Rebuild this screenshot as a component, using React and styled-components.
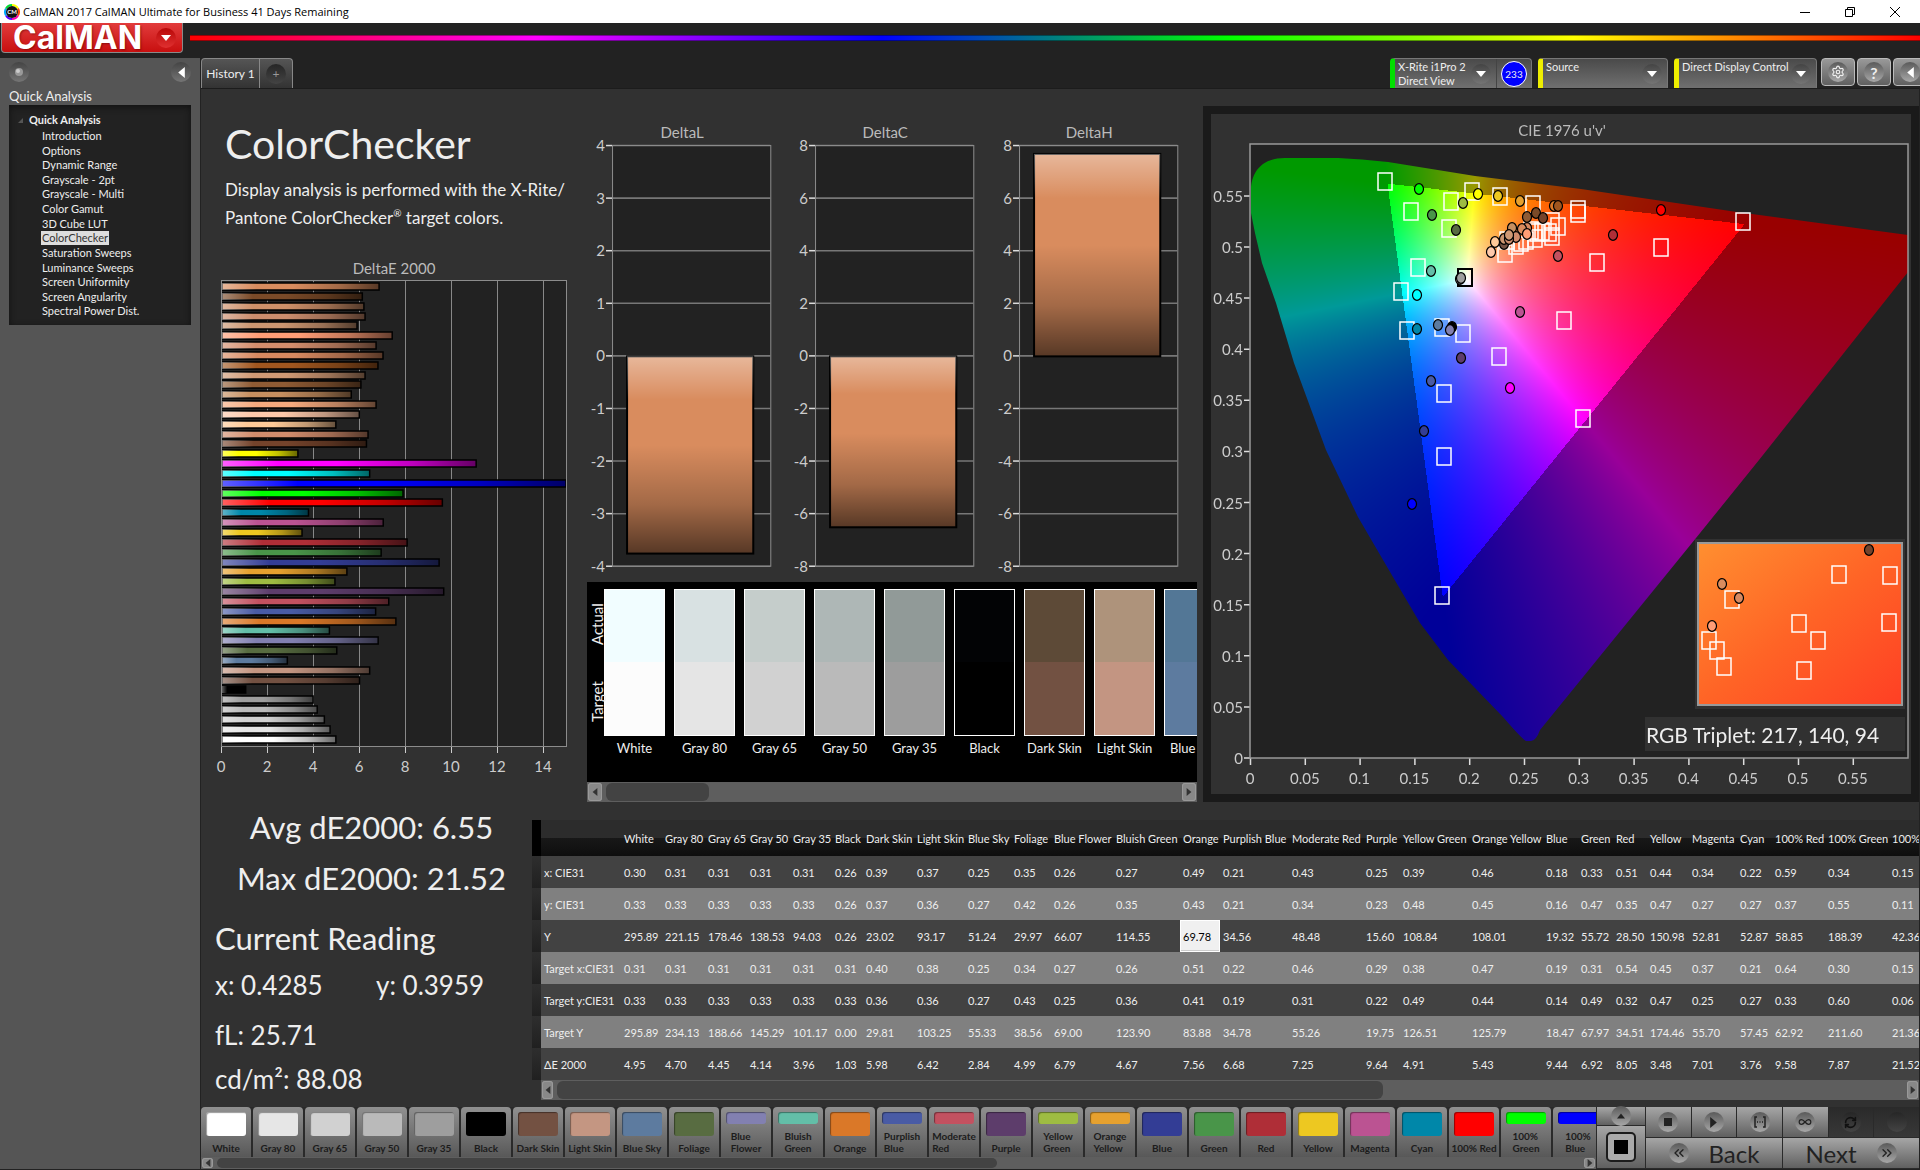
import React, {useEffect, useRef} from 'react';
import styled, {createGlobalStyle, css} from 'styled-components';
import {ChevronsLeft, ChevronsRight, Infinity as Loop, RefreshCw, Settings} from 'lucide-react';

const GlobalStyle = createGlobalStyle`
    * {
        box-sizing: border-box;
    }
    body {
        margin: 0;
        background: #222;
        color: #eee;
        font-family: Lato, "Liberation Sans", sans-serif;
        font-size: 11px;
        overflow: hidden;
    }
    button {
        font-family: inherit;
        font-size: inherit;
        color: inherit;
        border: 0;
        padding: 0;
        background: none;
    }
    h1, h2, p, ul {
        margin: 0;
        padding: 0;
        font-weight: 400;
    }
    svg text {
        font-family: Lato, "Liberation Sans", sans-serif;
    }
`

// ---------- data ----------

const pages = [
    'Introduction', 'Options', 'Dynamic Range', 'Grayscale - 2pt', 'Grayscale - Multi', 'Color Gamut',
    '3D Cube LUT', 'ColorChecker', 'Saturation Sweeps', 'Luminance Sweeps', 'Screen Uniformity',
    'Screen Angularity', 'Spectral Power Dist.',
];

// name, colour, column width, x, y, Y, target x, target y, target Y, dE
const patches = [
    ['White', '#ffffff', 41, '0.30', '0.33', '295.89', '0.31', '0.33', '295.89', '4.95'],
    ['Gray 80', '#e6e6e6', 43, '0.31', '0.33', '221.15', '0.31', '0.33', '234.13', '4.70'],
    ['Gray 65', '#d1d1d1', 42, '0.31', '0.33', '178.46', '0.31', '0.33', '188.66', '4.45'],
    ['Gray 50', '#bababa', 43, '0.31', '0.33', '138.53', '0.31', '0.33', '145.29', '4.14'],
    ['Gray 35', '#9e9e9e', 42, '0.31', '0.33', '94.03', '0.31', '0.33', '101.17', '3.96'],
    ['Black', '#000000', 31, '0.26', '0.26', '0.26', '0.31', '0.33', '0.00', '1.03'],
    ['Dark Skin', '#735142', 51, '0.39', '0.37', '23.02', '0.40', '0.36', '29.81', '5.98'],
    ['Light Skin', '#c49682', 51, '0.37', '0.36', '93.17', '0.38', '0.36', '103.25', '6.42'],
    ['Blue Sky', '#5d7b9f', 46, '0.25', '0.27', '51.24', '0.25', '0.27', '55.33', '2.84'],
    ['Foliage', '#586c41', 40, '0.35', '0.42', '29.97', '0.34', '0.43', '38.56', '4.99'],
    ['Blue Flower', '#8280b1', 62, '0.26', '0.26', '66.07', '0.27', '0.25', '69.00', '6.79'],
    ['Bluish Green', '#63bea8', 67, '0.27', '0.35', '114.55', '0.26', '0.36', '123.90', '4.67'],
    ['Orange', '#da7828', 40, '0.49', '0.43', '69.78', '0.51', '0.41', '83.88', '7.56'],
    ['Purplish Blue', '#495ba5', 69, '0.21', '0.21', '34.56', '0.22', '0.19', '34.78', '6.68'],
    ['Moderate Red', '#c35160', 74, '0.43', '0.34', '48.48', '0.46', '0.31', '55.26', '7.25'],
    ['Purple', '#5d3d6b', 37, '0.25', '0.23', '15.60', '0.29', '0.22', '19.75', '9.64'],
    ['Yellow Green', '#9ebc42', 69, '0.39', '0.48', '108.84', '0.38', '0.49', '126.51', '4.91'],
    ['Orange Yellow', '#e6a12f', 74, '0.46', '0.45', '108.01', '0.47', '0.44', '125.79', '5.43'],
    ['Blue', '#333d95', 35, '0.18', '0.16', '19.32', '0.19', '0.14', '18.47', '9.44'],
    ['Green', '#499549', 35, '0.33', '0.47', '55.72', '0.31', '0.49', '67.97', '6.92'],
    ['Red', '#af2e37', 34, '0.51', '0.35', '28.50', '0.54', '0.32', '34.51', '8.05'],
    ['Yellow', '#edc821', 42, '0.44', '0.47', '150.98', '0.45', '0.47', '174.46', '3.48'],
    ['Magenta', '#bb5392', 48, '0.34', '0.27', '52.81', '0.37', '0.25', '55.70', '7.01'],
    ['Cyan', '#0087a9', 35, '0.22', '0.27', '52.87', '0.21', '0.27', '57.45', '3.76'],
    ['100% Red', '#ff0000', 53, '0.59', '0.37', '58.85', '0.64', '0.33', '62.92', '9.58'],
    ['100% Green', '#00ff00', 64, '0.34', '0.55', '188.39', '0.30', '0.60', '211.60', '7.87'],
    ['100% Blue', '#0000ff', 64, '0.15', '0.11', '42.36', '0.15', '0.06', '21.36', '21.52'],
];

const rowNames = ['x: CIE31', 'y: CIE31', 'Y', 'Target x:CIE31', 'Target y:CIE31', 'Target Y', 'ΔE 2000'];

const extraBars = [
    ['#d98c5e', 6.83], ['#7a4a28', 6.1], ['#ce9069', 6.17], ['#cc8d6d', 6.22], ['#cb9570', 5.87],
    ['#ff9d76', 7.4], ['#d38d6c', 6.7], ['#d78960', 7], ['#a0561f', 6.78], ['#d09974', 6.22],
    ['#8f5b34', 6.04], ['#c68f60', 5.62], ['#f6aa7e', 6.7], ['#fec9ab', 5.97], ['#ffca98', 4.95],
    ['#d18c6c', 6.35], ['#74432b', 6.28], ['#ffff00', 3.3], ['#ff00ff', 11.05], ['#00ffff', 6.42],
];
const bars = extraBars.concat(patches.map(p => [p[1], Number(p[9])]).reverse());

const compared = [
    ['White', '#f1fdff', '#fcfcfc'], ['Gray 80', '#d8e1e2', '#e5e5e5'], ['Gray 65', '#c5cdcb', '#d1d1d1'],
    ['Gray 50', '#aeb7b6', '#bababa'], ['Gray 35', '#919a98', '#9d9d9d'], ['Black', '#020305', '#000000'],
    ['Dark Skin', '#5d4a37', '#725142'], ['Light Skin', '#ae937b', '#c39582'], ['Blue Sky', '#537796', '#5d7b9f'],
];

const targets = [
    [174, 67], [200, 97], [240, 87], [261, 77], [289, 82], [322, 90], [238, 114], [207, 153], [190, 177],
    [196, 216], [231, 213], [252, 219], [288, 242], [233, 279], [233, 342], [372, 304], [353, 206],
    [386, 148], [450, 133], [532, 107], [367, 95], [367, 99], [347, 112], [341, 122], [338, 118],
    [341, 107], [294, 139], [305, 131], [310, 128], [315, 126], [324, 124], [326, 118], [320, 116],
    [331, 117], [296, 126], [231, 481],
];

const readings = [
    [208, 75, '#00ff00'], [221, 101, '#499549'], [252, 89, '#9ebc42'], [267, 80, '#ffff00'],
    [287, 82, '#edc821'], [309, 87, '#e6a12f'], [343, 92, '#da7828'], [347, 92, '#a0561f'],
    [450, 96, '#ff0000'], [402, 121, '#af2e37'], [347, 142, '#c35160'], [245, 116, '#586c41'],
    [220, 157, '#63bea8'], [206, 181, '#00ffff'], [206, 215, '#0087a9'], [227, 211, '#5d7b9f'],
    [241, 213, '#000000'], [239, 216, '#8280b1'], [250, 244, '#5d3d6b'], [220, 267, '#495ba5'],
    [299, 274, '#ff00ff'], [309, 198, '#bb5392'], [213, 317, '#333d95'], [201, 390, '#0000ff'],
    [249, 165, '#d1d1d1'], [250, 164, '#9e9e9e'], [316, 103, '#8f5b34'], [325, 99, '#7a4a28'],
    [332, 104, '#74432b'], [301, 114, '#c68f60'], [316, 114, '#d78960'], [311, 115, '#d98c5e'],
    [316, 120, '#ff9d76'], [305, 123, '#d18c6c'], [293, 130, '#735142'], [293, 125, '#cb9570'],
    [298, 125, '#cc8d6d'], [298, 121, '#d09974'], [284, 128, '#ffca98'], [280, 138, '#fec9ab'],
];

const insetTargets = [
    [628, 460], [679, 461], [521, 485], [588, 509], [678, 508], [607, 526], [498, 526], [506, 536],
    [513, 552], [593, 556],
];
const insetReadings = [[658, 436, '#74432b'], [511, 470, '#d98c5e'], [528, 484, '#d78960'], [501, 512, '#ff9d76']];

// ---------- frame ----------

const TitleBar = styled.header`
    display: flex;
    align-items: center;
    height: 23px;
    padding: 0 17px 0 4px;
    background: #fff;
    color: #000;
    font-family: "Open Sans", sans-serif;
    font-size: 11px;
    svg {
        display: block;
    }
`
const AppTitle = styled.span`
    flex: 1;
    padding-left: 3px;
`
const WindowButtons = styled.div`
    display: flex;
    gap: 29px;
`

const Brand = styled.div`
    display: flex;
    align-items: flex-start;
    gap: 7px;
    height: 35px;
`
const LogoButton = styled.button`
    display: flex;
    align-items: center;
    justify-content: space-between;
    width: 182px;
    height: 30px;
    margin-left: 1px;
    padding: 0 6px 0 11px;
    border: solid #8a8a8a;
    border-width: 0 1px 1px;
    border-radius: 0 0 4px 4px;
    background: linear-gradient(#e23c3c, #c80f0f);
    color: #fff;
    font: 700 32px/30px Inter, sans-serif;
    text-shadow: 1px 1px 2px #5008;
`
const Rainbow = styled.div`
    flex: 1;
    height: 6px;
    margin-top: 12px;
    border: solid #0006;
    border-width: 1px 0;
    background: linear-gradient(to right, #f00, #f0f 20%, #00f 40%, #0f0 60%, #ff0 80%, #f00);
`

const Round = styled.span`
    display: flex;
    align-items: center;
    justify-content: center;
    flex: none;
    width: 20px;
    height: 20px;
    border-radius: 50%;
    background: linear-gradient(#444, #757575);
    ${props => props.$red && css`
        background: linear-gradient(#b80808, #e03030);
    `}
    ${props => props.$light && css`
        background: linear-gradient(#5a5a5a, #a8a8a8);
    `}
    ${props => props.$dim && css`
        background: linear-gradient(#262626, #444);
    `}
`

const Body = styled.div`
    display: flex;
`
const Sidebar = styled.aside`
    flex: none;
    width: 200px;
    padding: 4px 9px 0 9px;
    background: #555;
`
const SidebarTop = styled.div`
    display: flex;
    justify-content: space-between;
`
const SidebarTitle = styled.h2`
    margin-top: 5px;
    font-size: 13px;
    line-height: 18px;
`
const Tree = styled.nav`
    height: 220px;
    padding: 8px 0 6px 20px;
    background: #222;
    box-shadow: inset 0 2px 6px #111;
`
const TreeRoot = styled.div`
    position: relative;
    font-weight: 700;
    line-height: 14px;
    svg {
        position: absolute;
        left: -11px;
        top: 5px;
    }
`
const TreeList = styled.ul`
    display: grid;
    grid-auto-rows: 1fr;
    height: 190px;
    margin-top: 2px;
    padding-left: 12px;
    line-height: 14px;
    list-style: none;
`
const TreeLink = styled.a`
    display: inline-block;
    padding: 0 1px;
    color: ${props => props.$on ? '#333' : '#eee'};
    background: ${props => props.$on ? '#ddd' : 'none'};
    text-decoration: none;
`

const Main = styled.main`
    flex: 1;
    min-width: 0;
    padding: 0 1px;
`
const TopBar = styled.div`
    display: flex;
    justify-content: space-between;
    height: 30px;
`
const Tabs = styled.div`
    display: flex;
    border: 1px solid #888;
    border-bottom: 0;
    border-radius: 4px 4px 0 0;
    background: linear-gradient(#555, #333);
`
const Tab = styled.button`
    display: flex;
    align-items: center;
    justify-content: center;
    width: ${props => props.$w}px;
    font-size: 12px;
    & + & {
        border-left: 1px solid #888;
        color: #999;
    }
`
const Devices = styled.div`
    display: flex;
    gap: 6px;
    margin-right: -8px;
    overflow: hidden;
`
const Device = styled.div`
    display: flex;
    width: ${props => props.$w}px;
    border: 1px solid #777;
    border-left: 5px solid ${props => props.$lamp};
    border-bottom: 0;
    border-radius: 4px 4px 0 0;
    background: linear-gradient(#4a4a4a, #707070);
`
const DeviceButton = styled.button`
    display: flex;
    flex: 1;
    justify-content: space-between;
    padding: 1px 5px 0 3px;
    text-align: left;
    line-height: 14px;
    white-space: nowrap;
    ${Round} {
        margin-top: 4px;
    }
`
const Meter = styled.div`
    display: flex;
    align-items: center;
    justify-content: center;
    width: 35px;
    border-left: 1px solid #444;
    span {
        width: 26px;
        height: 26px;
        border: 1px solid #fff;
        border-radius: 50%;
        background: #00f;
        font-size: 10px;
        line-height: 24px;
        text-align: center;
    }
`
const Tools = styled.div`
    display: flex;
    gap: 2px;
    margin-left: -2px;
`
const Tool = styled.button`
    display: flex;
    align-items: center;
    justify-content: center;
    width: 34px;
    height: 28px;
    border: 1px solid #bbb;
    border-radius: 4px;
    background: linear-gradient(#999, #606060);
    font-size: 16px;
    font-weight: 700;
`

// ---------- workspace ----------

const Workspace = styled.div`
    border-top: 1px solid #1c1c1c;
    background: #313131;
    padding-bottom: 6px;
`
const Upper = styled.section`
    display: grid;
    grid-template-columns: 386fr 610fr 722fr;
    align-items: start;
`
const Intro = styled.div`
    padding-top: 27px;
    svg {
        display: block;
        width: 100%;
        margin-top: 23px;
    }
`
const Heading = styled.h1`
    padding-left: 24px;
    font-size: 41px;
    line-height: 56px;
`
const Lead = styled.p`
    padding: 4px 0 0 24px;
    font-size: 17px;
    line-height: 28px;
    white-space: nowrap;
    sup {
        font-size: 10px;
        line-height: 0;
    }
`
const Middle = styled.div`
    min-width: 0;
    padding-top: 31px;
`
const Deltas = styled.div`
    display: grid;
    grid-template-columns: repeat(3, 1fr);
    svg {
        display: block;
        width: 100%;
    }
`
const Strip = styled.div`
    display: flex;
    gap: 9px;
    height: 200px;
    margin-top: 1px;
    padding: 7px 0 0 3px;
    background: #000;
    overflow: hidden;
`
const StripLabels = styled.div`
    display: flex;
    flex-direction: column;
    width: 14px;
    height: 156px;
    margin-right: -9px;
    padding-bottom: 8px;
    font-size: 15px;
    line-height: 14px;
    span {
        flex: 1;
        writing-mode: vertical-rl;
        transform: rotate(180deg);
        text-align: center;
    }
    span:first-child {
        padding-top: 8px;
    }
`
const Compare = styled.div`
    flex: none;
    width: 61px;
    font-size: 13px;
    text-align: center;
    white-space: nowrap;
    line-height: 25px;
`
const ComparePair = styled.div`
    height: 147px;
    border: 1px solid #fff;
    background: linear-gradient(${props => props.$actual} 50%, ${props => props.$target} 50%);
`

const CieFrame = styled.div`
    display: grid;
    margin: 17px 0 0 6px;
    border: 8px solid #1a1a1a;
    canvas, svg {
        grid-area: 1 / 1;
        display: block;
        width: 100%;
    }
`

const Lower = styled.section`
    display: grid;
    grid-template-columns: 331fr 1387fr;
`
const Numbers = styled.div`
    padding-left: 14px;
    font-size: 26px;
    line-height: 44px;
`
const Summary = styled.div`
    padding-right: 4px;
    font-size: 31px;
    line-height: 51px;
    text-align: center;
`
const ReadingTitle = styled.h2`
    margin-top: 9px;
    font-size: 31px;
    line-height: 50px;
`
const Pair = styled.div`
    display: grid;
    grid-template-columns: 161px 1fr;
    margin-bottom: 6px;
`

const TableBox = styled.div`
    min-width: 0;
    padding-top: 18px;
`
const TableClip = styled.div`
    overflow: hidden;
`
const Table = styled.table`
    width: 1421px;
    table-layout: fixed;
    border-collapse: collapse;
    font-size: 11px;
    th, td {
        height: 32px;
        padding: 0 0 0 3px;
        font-weight: 400;
        text-align: left;
        white-space: nowrap;
    }
    thead th {
        height: 36px;
        background: linear-gradient(#2c2c2c 50%, #181818 50%, #0e0e0e);
    }
    tbody tr {
        background: #424242;
    }
    tbody tr:nth-child(even) {
        background: #808080;
    }
    tbody td:first-child {
        background: linear-gradient(#2e2e2e, #202020);
    }
    thead td {
        background: #000;
    }
`
const Cell = styled.td`
    ${props => props.$on && css`
        background: #f0f0f0;
        color: #000;
        box-shadow: inset 0 0 0 1px #fff, inset 0 -3px 0 -1px #ccc;
    `}
`

const Track = styled.div`
    display: flex;
    align-items: stretch;
    height: ${props => props.$h}px;
    margin-left: ${props => props.$indent || 0}px;
    padding: 1px;
    gap: 4px;
    background: #5e5e5e;
`
const TrackButton = styled.button`
    display: flex;
    align-items: center;
    justify-content: center;
    width: ${props => props.$w}px;
    border-radius: 3px;
    background: #888;
    box-shadow: inset 0 0 0 1px #999;
`
const Thumb = styled.div`
    width: ${props => props.$part}%;
    margin-right: auto;
    border-radius: 6px;
    background: #434343;
`

// ---------- bottom bar ----------

const BottomBar = styled.footer`
    display: flex;
    gap: 1px;
    height: 62px;
    background: #2a2a2a;
`
const PatchArea = styled.div`
    flex: 1;
    min-width: 0;
`
const PatchList = styled.div`
    display: flex;
    gap: 2px;
    overflow: hidden;
`
const Patch = styled.button`
    display: flex;
    flex: none;
    flex-direction: column;
    align-items: center;
    justify-content: space-between;
    width: 50px;
    height: 50px;
    padding: 5px 0 3px;
    border-radius: 4px 4px 0 0;
    background: linear-gradient(#909090, #585858);
    color: #1c1c1c;
    font-size: 10px;
    font-weight: 700;
    line-height: 12px;
    text-align: left;
`
const Chip = styled.i`
    width: 40px;
    height: ${props => props.$short ? 12 : 24}px;
    border-radius: 3px;
    background: ${props => props.$color};
    box-shadow: inset 1px 1px 1px #0006;
`
const PatchName = styled.span`
    white-space: pre;
`
const Side = styled.div`
    display: grid;
    grid-template-rows: 18px 42px;
    gap: 1px;
    width: 48px;
`
const Key = styled.button`
    display: flex;
    align-items: center;
    justify-content: center;
    gap: ${props => props.$gap || 0}px;
    background: ${props => props.$dark ? 'linear-gradient(#2a2a2a, #383838)' : 'linear-gradient(#a6a6a6, #606060)'};
    color: #222;
    font-size: 24px;
    svg {
        display: block;
    }
`
const Controls = styled.div`
    display: grid;
    grid-template-columns: repeat(6, 1fr);
    grid-template-rows: 30px 30px;
    gap: 1px;
    width: 273px;
`
const Wide = styled(Key)`
    grid-column: span 3;
`

// ---------- parts ----------

function Arrow({dir, size = 8, color = '#fff'}) {
    const d = {
        down: 'M0 2h10L5 8z',
        up: 'M0 8h10L5 2z',
        left: 'M8 0v10L2 5z',
        right: 'M2 0v10l6-5z',
    }[dir];
    return <svg width={size} height={size} viewBox="0 0 10 10"><path d={d} fill={color}/></svg>;
}

function ScrollBar({h, w, part, indent}) {
    return (
        <Track $h={h} $indent={indent}>
            <TrackButton $w={w} aria-label="Scroll left"><Arrow dir="left" color="#333"/></TrackButton>
            <Thumb $part={part}/>
            <TrackButton $w={w} aria-label="Scroll right"><Arrow dir="right" color="#333"/></TrackButton>
        </Track>
    );
}

function Shade({id, vertical}) {
    return (
        <linearGradient id={id} x1="0" y1="0" x2={vertical ? 0 : 1} y2={vertical ? 1 : 0}>
            <stop offset="0" stopColor="#fff" stopOpacity=".38"/>
            <stop offset=".22" stopColor="#fff" stopOpacity="0"/>
            <stop offset=".45" stopColor="#000" stopOpacity="0"/>
            <stop offset=".75" stopColor="#000" stopOpacity=".25"/>
            <stop offset="1" stopColor="#000" stopOpacity=".6"/>
        </linearGradient>
    );
}

function DeltaEChart() {
    return (
        <svg viewBox="0 0 386 530">
            <defs><Shade id="shadeRow"/></defs>
            <text x="193" y="19" fontSize="15" fill="#bbb" textAnchor="middle">DeltaE 2000</text>
            <rect x="20" y="25" width="345" height="466" fill="#222"/>
            {[0, 2, 4, 6, 8, 10, 12, 14].map(v => (
                <g key={v}>
                    <path d={`M${20.5 + v * 23} 25v466`} stroke="#888"/>
                    <path d={`M${20.5 + v * 23} 491v7`} stroke="#ccc"/>
                    <text x={20 + v * 23} y="517" fontSize="15" fill="#ccc" textAnchor="middle">{v}</text>
                </g>
            ))}
            {bars.map(([color, value], i) => {
                const box = {x: 21, y: Math.round(28 + i * 9.84), width: Math.min(value * 23, 344), height: 7};
                return (
                    <g key={i}>
                        <rect {...box} fill={color} stroke="#000" strokeWidth="1.5"/>
                        <rect {...box} fill="url(#shadeRow)"/>
                    </g>
                );
            })}
            <rect x="20.5" y="25.5" width="345" height="466" fill="none" stroke="#8c8c8c"/>
        </svg>
    );
}

function DeltaChart({name, max, value}) {
    const ticks = [4, 3, 2, 1, 0, -1, -2, -3, -4];
    const tall = Math.abs(value) / max * 210;
    const box = {x: 40, y: value < 0 ? 236 : 236 - tall, width: 126, height: tall};
    return (
        <svg viewBox="0 0 203 460">
            <defs><Shade id="shadeCol" vertical/></defs>
            <text x="95" y="18" fontSize="15" fill="#bbb" textAnchor="middle">{name}</text>
            <rect x="25" y="25" width="158" height="421" fill="#222"/>
            {ticks.map((t, i) => (
                <g key={t}>
                    <path d={`M25 ${25.5 + i * 52.5}h158`} stroke="#777" strokeWidth="1.5"/>
                    <path d={`M19 ${25.5 + i * 52.5}h6`} stroke="#ddd" strokeWidth="1.5"/>
                    <text x="18" y={31 + i * 52.5} fontSize="15" fill="#ccc" textAnchor="end">{t * max / 4}</text>
                </g>
            ))}
            <rect {...box} fill="#d98c5e" stroke="#000" strokeWidth="2"/>
            <rect {...box} fill="url(#shadeCol)"/>
            <rect x="25.5" y="25.5" width="158" height="420" fill="none" stroke="#8c8c8c"/>
        </svg>
    );
}

const LOCUS = 'M40 73C42 56 52 44 74 44H127Q150 45 177 48L264 62 370 75 526 98 697 121V158L548 346 485 424 '
    + '329 616Q325 627 320 627H315Q311 625 292 603L264 574 237 546 209 509 182 463 147 403 115 336 83 249 '
    + '65 189 51 149 44 119 40 99Z';

// colour of one u'v' point at full brightness, dimmed outside Rec.709
function chroma(u, v) {
    const X = 9 * u / (4 * v);
    const Z = (12 - 3 * u - 20 * v) / (4 * v);
    const rgb = [
        3.2406 * X - 1.5372 - 0.4986 * Z,
        -0.9689 * X + 1.8758 + 0.0415 * Z,
        0.0557 * X - 0.2040 + 1.0570 * Z,
    ];
    const top = Math.max(...rgb);
    const level = Math.min(...rgb) < 0 ? 153 : 255;
    return rgb.map(c => level * Math.max(c, 0) / top);
}

function CieFill() {
    const ref = useRef(null);
    useEffect(() => {
        const ctx = ref.current.getContext('2d');
        const img = ctx.createImageData(700, 680);
        for (let y = 0; y < 640; y++) {
            for (let x = 38; x < 700; x++) {
                const [r, g, b] = chroma((x - 39) / 1096, (644 - y) / 1022);
                img.data.set([r, g, b, 255], (y * 700 + x) * 4);
            }
        }
        ctx.putImageData(img, 0, 0);
        ctx.globalCompositeOperation = 'destination-in';
        ctx.fill(new Path2D(LOCUS));
        ctx.globalCompositeOperation = 'destination-over';
        ctx.fillStyle = '#222';
        ctx.fillRect(39, 30, 658, 614);
    }, []);
    return <canvas ref={ref} width="700" height="680"/>;
}

function Target({at: [x, y], color = '#fff', w = 1.5}) {
    return <rect x={x - 7} y={y - 8} width="14" height="17" fill="none" stroke={color} strokeWidth={w}/>;
}

function Dot({at: [x, y, color]}) {
    return <ellipse cx={x} cy={y} rx="4.5" ry="5.3" fill={color} stroke="#000" strokeWidth="1.2"/>;
}

function CieChart() {
    const steps = [0, 1, 2, 3, 4, 5, 6, 7, 8, 9, 10, 11];
    return (
        <CieFrame>
            <CieFill/>
            <svg viewBox="0 0 700 680">
                <defs>
                    <linearGradient id="inset" x1="0" y1="0" x2="1" y2="1">
                        <stop offset="0" stopColor="#ff8f30"/>
                        <stop offset=".5" stopColor="#ff6426"/>
                        <stop offset="1" stopColor="#ff3f24"/>
                    </linearGradient>
                </defs>
                <text x="351" y="22" fontSize="15" fill="#bbb" textAnchor="middle">CIE 1976 u'v'</text>
                {steps.map(s => (
                    <g key={s} fontSize="15" fill="#ccc">
                        <path d={`M${39.5 + s * 54.8} 644v7M33 ${644 - s * 51.1}h6`} stroke="#ddd" strokeWidth="1.5"/>
                        <text x={39 + s * 54.8} y="670" textAnchor="middle">{s / 20}</text>
                        <text x="32" y={650 - s * 51.1} textAnchor="end">{s / 20}</text>
                    </g>
                ))}
                <rect x="39" y="30" width="658" height="614" fill="none" stroke="#999" strokeWidth="1.5"/>
                {targets.map((t, i) => <Target key={i} at={t}/>)}
                <Target at={[254, 163]} color="#000" w={2}/>
                {readings.map((r, i) => <Dot key={i} at={r}/>)}
                <rect x="484" y="425" width="210" height="170" fill="#313131"/>
                <rect x="487" y="429" width="204" height="162" fill="url(#inset)" stroke="#999" strokeWidth="2"/>
                {insetTargets.map((t, i) => <Target key={i} at={t}/>)}
                {insetReadings.map((r, i) => <Dot key={i} at={r}/>)}
                <rect x="434" y="603" width="260" height="34" fill="#313131"/>
                <text x="435" y="629" fontSize="21" fill="#eee">RGB Triplet: 217, 140, 94</text>
            </svg>
        </CieFrame>
    );
}

function DataTable() {
    return (
        <TableBox>
            <TableClip>
                <Table>
                    <colgroup>
                        <col width="9"/>
                        <col width="80"/>
                        {patches.map(p => <col key={p[0]} width={p[2]}/>)}
                    </colgroup>
                    <thead>
                        <tr>
                            <td/>
                            <th/>
                            {patches.map(p => <th key={p[0]} scope="col">{p[0]}</th>)}
                        </tr>
                    </thead>
                    <tbody>
                        {rowNames.map((name, r) => (
                            <tr key={name}>
                                <td/>
                                <th scope="row">{name}</th>
                                {patches.map(p => (
                                    <Cell key={p[0]} $on={name === 'Y' && p[0] === 'Orange'}>{p[3 + r]}</Cell>
                                ))}
                            </tr>
                        ))}
                    </tbody>
                </Table>
            </TableClip>
            <ScrollBar h={20} w={11} part={60} indent={9}/>
        </TableBox>
    );
}

function PatchButton({name, color}) {
    // long two-word names wrap under a shorter chip
    const wraps = name.length > 10 || name === '100% Green' || name === '100% Blue';
    return (
        <Patch>
            <Chip $short={wraps} $color={color}/>
            <PatchName>{wraps ? name.replace(' ', '\n') : name}</PatchName>
        </Patch>
    );
}

function Header() {
    return (
        <>
            <TitleBar>
                <svg width="16" height="16" viewBox="0 0 16 16">
                    <path d="M8 1a7 7 0 0 1 6 3.500" stroke="#ff0" strokeWidth="2" fill="none"/>
                    <path d="M14 4.500a7 7 0 0 1 0 7" stroke="#f40" strokeWidth="2" fill="none"/>
                    <path d="M14 11.500a7 7 0 0 1-6 3.500" stroke="#f0a" strokeWidth="2" fill="none"/>
                    <path d="M8 15a7 7 0 0 1-6-3.500" stroke="#50f" strokeWidth="2" fill="none"/>
                    <path d="M2 11.500a7 7 0 0 1 0-7" stroke="#0af" strokeWidth="2" fill="none"/>
                    <path d="M2 4.500A7 7 0 0 1 8 1" stroke="#0d3" strokeWidth="2" fill="none"/>
                    <circle cx="8" cy="8" r="6" fill="#111"/>
                    <text x="8" y="10" fontSize="6" fontWeight="700" fill="#fff" textAnchor="middle">CM</text>
                </svg>
                <AppTitle>CalMAN 2017 CalMAN Ultimate for Business 41 Days Remaining</AppTitle>
                <WindowButtons>
                    <button aria-label="Minimize">
                        <svg width="16" height="16"><path d="M3 8.500h10" stroke="#000"/></svg>
                    </button>
                    <button aria-label="Restore">
                        <svg width="16" height="16" fill="none" stroke="#000">
                            <path d="M3.500 5.500h7v7h-7zM5.500 5.500v-2h7v7h-2"/>
                        </svg>
                    </button>
                    <button aria-label="Close">
                        <svg width="16" height="16"><path d="M3 3l10 10M13 3L3 13" stroke="#000"/></svg>
                    </button>
                </WindowButtons>
            </TitleBar>
            <Brand>
                <LogoButton>CalMAN<Round $red><Arrow dir="down" size={10}/></Round></LogoButton>
                <Rainbow/>
            </Brand>
        </>
    );
}

function SideNav() {
    return (
        <Sidebar>
            <SidebarTop>
                <Round>
                    <svg width="8" height="8"><circle cx="4" cy="4" r="4" fill="#999"/><circle cx="3" cy="3" r="2" fill="#ccc"/></svg>
                </Round>
                <Round as="button" aria-label="Collapse"><Arrow dir="left" size={11}/></Round>
            </SidebarTop>
            <SidebarTitle>Quick Analysis</SidebarTitle>
            <Tree>
                <TreeRoot>
                    <svg width="5" height="5"><path d="M5 0v5H0z" fill="#555"/></svg>
                    Quick Analysis
                </TreeRoot>
                <TreeList>
                    {pages.map(p => (
                        <li key={p}><TreeLink href="#" $on={p === 'ColorChecker'}>{p}</TreeLink></li>
                    ))}
                </TreeList>
            </Tree>
        </Sidebar>
    );
}

function TopTools() {
    return (
        <TopBar>
            <Tabs>
                <Tab $w={57}>History 1</Tab>
                <Tab $w={33}><Round $dim>+</Round></Tab>
            </Tabs>
            <Devices>
                <Device $w={142} $lamp="#00e000">
                    <DeviceButton>
                        <span>X-Rite i1Pro 2<br/>Direct View</span>
                        <Round><Arrow dir="down" size={10}/></Round>
                    </DeviceButton>
                    <Meter><span>233</span></Meter>
                </Device>
                <Device $w={130} $lamp="#eeee00">
                    <DeviceButton>Source<Round><Arrow dir="down" size={10}/></Round></DeviceButton>
                </Device>
                <Device $w={143} $lamp="#eeee00">
                    <DeviceButton>
                        Direct Display Control
                        <Round><Arrow dir="down" size={10}/></Round>
                    </DeviceButton>
                </Device>
                <Tools>
                    <Tool aria-label="Settings"><Round $light><Settings size={14}/></Round></Tool>
                    <Tool aria-label="Help"><Round $light>?</Round></Tool>
                    <Tool aria-label="Collapse"><Round $light><Arrow dir="left" size={11}/></Round></Tool>
                </Tools>
            </Devices>
        </TopBar>
    );
}

function Footer() {
    return (
        <BottomBar>
            <PatchArea>
                <PatchList>
                    {patches.map(p => <PatchButton key={p[0]} name={p[0]} color={p[1]}/>)}
                </PatchList>
                <ScrollBar h={12} w={11} part={56}/>
            </PatchArea>
            <Side>
                <Key aria-label="Expand"><Round $light><Arrow dir="up" color="#222"/></Round></Key>
                <Key aria-label="Pattern window">
                    <svg width="32" height="32" viewBox="0 0 32 32">
                        <rect x="2" y="2" width="28" height="28" rx="4" fill="#aaa" stroke="#1c1c1c" strokeWidth="2"/>
                        <rect x="9" y="9" width="14" height="14" fill="#000"/>
                    </svg>
                </Key>
            </Side>
            <Controls>
                <Key aria-label="Stop"><Round $light><svg width="8" height="8"><rect width="8" height="8" fill="#222"/></svg></Round></Key>
                <Key aria-label="Play"><Round $light><Arrow dir="right" size={11} color="#222"/></Round></Key>
                <Key aria-label="Read series">
                    <Round $light>
                        <svg width="12" height="12" fill="none" stroke="#222" strokeWidth="1.500">
                            <path d="M3 1H1v10h2M9 1h2v10H9M3 6h1M5.500 6h1M8 6h1"/>
                        </svg>
                    </Round>
                </Key>
                <Key aria-label="Continuous"><Round $light><Loop size={14}/></Round></Key>
                <Key $dark aria-label="Refresh"><Round $dim><RefreshCw size={13} strokeWidth={3} color="#111"/></Round></Key>
                <Key $dark aria-label="Record"><Round $dim/></Key>
                <Wide $gap={20}><Round $light><ChevronsLeft size={16}/></Round>Back</Wide>
                <Wide $gap={20}>Next<Round $light><ChevronsRight size={16}/></Round></Wide>
            </Controls>
        </BottomBar>
    );
}

export default function App() {
    return (
        <>
            <GlobalStyle/>
            <Header/>
            <Body>
                <SideNav/>
                <Main>
                    <TopTools/>
                    <Workspace>
                        <Upper>
                            <Intro>
                                <Heading>ColorChecker</Heading>
                                <Lead>
                                    Display analysis is performed with the X-Rite/<br/>
                                    Pantone ColorChecker<sup>®</sup> target colors.
                                </Lead>
                                <DeltaEChart/>
                            </Intro>
                            <Middle>
                                <Deltas>
                                    <DeltaChart name="DeltaL" max={4} value={-3.75}/>
                                    <DeltaChart name="DeltaC" max={8} value={-6.5}/>
                                    <DeltaChart name="DeltaH" max={8} value={7.7}/>
                                </Deltas>
                                <Strip>
                                    <StripLabels><span>Actual</span><span>Target</span></StripLabels>
                                    {compared.map(([name, actual, target]) => (
                                        <Compare key={name}>
                                            <ComparePair $actual={actual} $target={target}/>
                                            {name}
                                        </Compare>
                                    ))}
                                </Strip>
                                <ScrollBar h={20} w={14} part={17}/>
                            </Middle>
                            <CieChart/>
                        </Upper>
                        <Lower>
                            <Numbers>
                                <Summary>Avg dE2000: 6.55<br/>Max dE2000: 21.52</Summary>
                                <ReadingTitle>Current Reading</ReadingTitle>
                                <Pair><span>x: 0.4285</span><span>y: 0.3959</span></Pair>
                                <div>fL: 25.71</div>
                                <div>cd/m²: 88.08</div>
                            </Numbers>
                            <DataTable/>
                        </Lower>
                    </Workspace>
                    <Footer/>
                </Main>
            </Body>
        </>
    );
}
